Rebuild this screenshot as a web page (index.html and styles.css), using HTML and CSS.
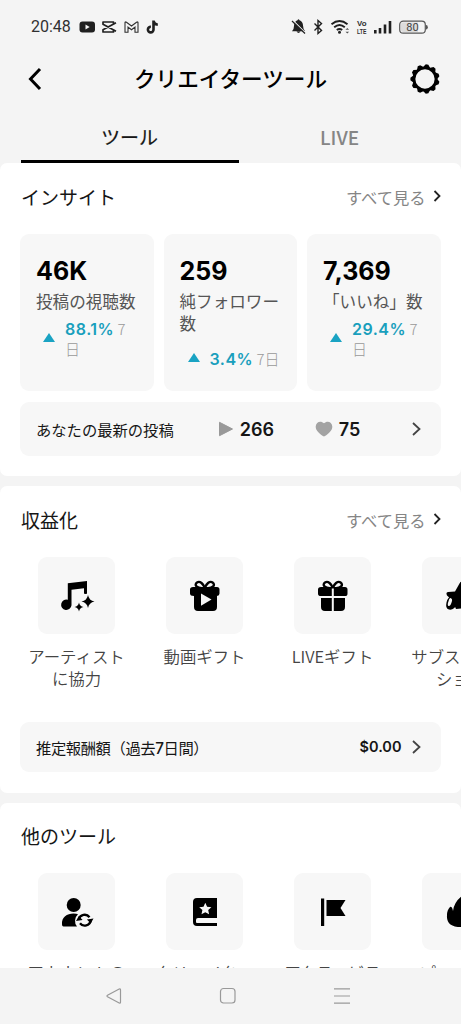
FILE: index.html
```
<!DOCTYPE html>
<html lang="ja">
<head>
<meta charset="utf-8">
<title>クリエイターツール</title>
<link rel="stylesheet" href="styles.css">
</head>
<body>
<div class="screen">
  <div class="status">
    <span class="clock">20:48</span>
    <svg class="apps" width="84" height="16" viewBox="0 0 84 16" fill="none">
      <rect x="0.500" y="2.500" width="15.500" height="11" rx="3" fill="#202020"/><path d="M6.500 5.500v5l4.200-2.500z" fill="#f4f4f4"/>
      <path d="M37 3.800 24 10.800V13H34.500V11.500M37 12.200 24 5.200V3H34.500V4.500" stroke="#202020" stroke-width="1.700" stroke-linejoin="round"/>
      <path d="M46 13.300V3.500q0-1 1.500-.3L52.500 7l5-3.800q1.500-.7 1.500.3v9.800h-3V8l-3.500 2.700L49 8v5.300z" stroke="#303030" stroke-width="1.100"/>
      <path d="M74.500 1.500v9a2.800 2.800 0 1 1-2.600-2.700M74.500 2q.6 3.300 4.300 3.700" stroke="#202020" stroke-width="2.600"/>
    </svg>
    <svg class="signals" width="138" height="20" viewBox="0 0 138 20" fill="none">
      <path d="M2 14.200q2-1.700 2-5.200Q4.200 4.300 7.500 3.300q1-2 2 0 3.300 1 3.600 5.700 0 3.500 2 5.200zM6.500 14.500h4q-2 2.800-4 0" fill="#202020"/><path d="M3.500 4 15.500 16" stroke="#f4f4f4" stroke-width="1.200"/><path d="M2 4l13 12.500" stroke="#202020" stroke-width="1.200"/>
      <path d="m24.500 6.500 7 7-3.500 3v-13l3.500 3-7 7" stroke="#202020" stroke-width="1.400"/>
      <path d="M41.500 7.300q8-6.500 16 0M44.200 10.300q5.300-4.500 10.600 0M46.800 13q2.700-2.200 5.400 0" stroke="#202020" stroke-width="1.900"/><circle cx="49.500" cy="15.200" r="1.500" fill="#202020"/><path d="m55.500 12.800 1.800-1.800 1.800 1.800zm0 1.900 1.800 1.800 1.800-1.800z" fill="#555"/>
      <path d="M84 13h2.600v3.500H84zm4.700-2h2.600v5.500h-2.600zm5-3.500h2.600v9h-2.600zm5-3.500h2.600v12.500h-2.600z" fill="#202020"/>
      <rect x="109.700" y="4.200" width="25.600" height="12" rx="3.500" stroke="#555" stroke-width="1.200"/><path d="M113 5.500h15v9.500h-15q-2 0-2-2v-5.500q0-2 2-2" fill="#dcdcdc"/><path d="M136 8q1.800 0 1.800 2.200t-1.800 2.300z" fill="#555"/>
      <text x="67" y="9.300" class="volte" textLength="9.500" lengthAdjust="spacingAndGlyphs">Vo</text><text x="67" y="16.500" class="volte" textLength="9.500" lengthAdjust="spacingAndGlyphs">LTE</text>
      <text x="122.500" y="14" class="battery">80</text>
    </svg>
  </div>
  <header class="titlebar">
    <svg class="back" width="16" height="24" viewBox="0 0 16 24"><path d="M13 2 3.500 12l9.500 10" fill="none" stroke="#000" stroke-width="3"/></svg>
    <h1>クリエイターツール</h1>
    <svg class="gear" width="30" height="30" viewBox="-15 -15 30 30"><circle r="11" fill="none" stroke="#000" stroke-width="2.700"/>
      <g fill="#000"><path id="tooth" d="M-14.600-1.300v2.600L-11 4v-8z"/><use href="#tooth" transform="rotate(32.730)"/><use href="#tooth" transform="rotate(65.450)"/><use href="#tooth" transform="rotate(98.180)"/><use href="#tooth" transform="rotate(130.910)"/><use href="#tooth" transform="rotate(163.640)"/><use href="#tooth" transform="rotate(196.360)"/><use href="#tooth" transform="rotate(229.090)"/><use href="#tooth" transform="rotate(261.820)"/><use href="#tooth" transform="rotate(294.550)"/><use href="#tooth" transform="rotate(327.270)"/></g>
    </svg>
  </header>
  <nav class="tabs"><div class="tab active">ツール</div><div class="tab">LIVE</div></nav>
  <main>
    <section class="insights">
      <div class="head"><h2>インサイト</h2><div class="all">すべて見る<svg width="8" height="12" viewBox="0 0 8 12"><path d="m1.500 1 5 5-5 5"/></svg></div></div>
      <div class="stats">
        <div class="stat"><b>46K</b><p>投稿の視聴数</p><div class="change"><i class="up"></i><span><em>88.1%</em> 7<br>日</span></div></div>
        <div class="stat"><b>259</b><p>純フォロワー<br>数</p><div class="change single"><i class="up"></i><span><em>3.4%</em> 7日</span></div></div>
        <div class="stat"><b>7,369</b><p>「いいね」数</p><div class="change"><i class="up"></i><span><em>29.4%</em> 7<br>日</span></div></div>
      </div>
      <div class="row latest"><span>あなたの最新の投稿</span>
        <div class="metric plays"><svg width="16" height="16" viewBox="0 0 16 16"><path d="M1.500 1.300 14.500 8 1.500 14.700z" fill="#999" stroke="#999" stroke-linejoin="round"/></svg>266</div>
        <div class="metric likes"><svg width="18" height="16" viewBox="0 0 18 16"><path d="M9 2.300C6-.8 1 .6.700 5.500.5 9.500 5 13.500 9 15.500c4-2 8.500-6 8.300-10C17 .6 12-.8 9 2.300z" fill="#a3a3a3"/></svg>75</div>
        <svg class="chev" width="9" height="14" viewBox="0 0 9 14"><path d="m1 1 6.500 6L1 13"/></svg>
      </div>
    </section>
    <section class="earnings">
      <div class="head"><h2>収益化</h2><div class="all">すべて見る<svg width="8" height="12" viewBox="0 0 8 12"><path d="m1.500 1 5 5-5 5"/></svg></div></div>
      <div class="tools">
        <div class="tool"><div class="tile"><svg width="38" height="38" viewBox="0 0 38 38"><path d="M9.800 6.300 29 4v12.800q-3 .3-3-.3v-5.300l-12.500 1.500v15.500a5.200 5.200 0 1 1-3.700-5.400z"/><path d="M30 18q1 5.500 6.500 6.500Q31 25.500 30 31q-1-5.500-6.500-6.500Q29 23.500 30 18zm-9 7.500q.7 3.800 4.500 4.500-3.800.7-4.500 4.500-.7-3.800-4.500-4.500 3.800-.7 4.500-4.500z"/></svg></div><p>アーティスト<br>に協力</p></div>
        <div class="tool"><div class="tile"><svg width="38" height="38" viewBox="0 0 38 38"><path d="M18.500 11C10 12 8 7.500 11 5.500c3-2 6.500 1.500 7.800 5.500 1.300-4 4.800-7.500 7.800-5.500 3 2 1 6.500-7 5.500" fill="none" stroke="#000" stroke-width="2.400"/><path d="M7 10h24q2.500 0 2.500 2.500v4q0 2.300-2.500 2.500v11q0 4-4 4H12q-4 0-4-4V19q-4 0-4-2.500v-4Q4 10 7 10z"/><path d="M15 16.500v12.200L25.500 22.600z" fill="#f7f7f7"/></svg></div><p>動画ギフト</p></div>
        <div class="tool"><div class="tile"><svg width="38" height="38" viewBox="0 0 38 38"><path d="M18.500 11C10 12 8 7.500 11 5.500c3-2 6.500 1.500 7.800 5.500 1.300-4 4.800-7.500 7.800-5.500 3 2 1 6.500-7 5.500" fill="none" stroke="#000" stroke-width="2.400"/><path d="M7 10h24q2.500 0 2.500 2.500v4q0 2.700-2.500 2.700H7q-3 0-3-2.700v-4Q4 10 7 10zm0 11h24v9q0 4-4 4H11q-4 0-4-4z"/><path d="M17.800 11.500h2V34h-2z" fill="#f7f7f7"/><path d="M4 19h30v1.500H4z" fill="#f7f7f7"/></svg></div><p>LIVEギフト</p></div>
        <div class="tool"><div class="tile"><svg width="38" height="38" viewBox="0 0 38 38"><path d="M17.500 6.500q1.500-3.500 3.500 0l4 8 9 1q3 .5 1 3l-7 7 2 8q0 3-3 2l-8-4-5 .500-4-9-5-4.500q-1.500-3 1-3.500l7-.5z"/><path d="M12 17q6 4.500 2.500 10.500Q12 33.500 7 32.500q-4-1-2.500-7Q6 19 12 17z"/><path d="M8.300 21q2.500.5 1.500 3.800-1.300 4.700-3.300 4.200-1.500-1 0-4.800.500-2.700 1.800-3.200z" fill="#f7f7f7"/></svg></div><p>サブスクリプ<br>ション</p></div>
      </div>
      <div class="row estimate"><span>推定報酬額（過去<span class="num">7</span>日間）</span><strong>$0.00</strong><svg class="chev" width="9" height="14" viewBox="0 0 9 14"><path d="m1 1 6.500 6L1 13"/></svg></div>
    </section>
    <section class="others">
      <div class="head"><h2>他のツール</h2></div>
      <div class="tools">
        <div class="tool"><div class="tile"><svg width="38" height="38" viewBox="0 0 38 38"><circle cx="15.700" cy="12" r="7"/><path d="M4 31.500C3.500 24 9 20.500 15.500 20.500q3 0 4.500.7a9 9 0 0 0-1 12.300H5.500Q4 33.500 4 31.500z"/><path d="M20.800 26.500a6 6 0 0 1 10.700-2.300M32.700 27.500a6 6 0 0 1-10.700 2.700" fill="none" stroke="#000" stroke-width="2.300"/><path d="m18 28 2.800-5 3.800 4zm17.500-2.500-2.800 5-3.800-4z"/></svg></div><p>アカウントの<br>確認</p></div>
        <div class="tool"><div class="tile"><svg width="38" height="38" viewBox="0 0 38 38"><path d="M11 5h20v20H12q-2 0-2 2v2q0 1 1 1h20v3H11q-4 0-4-4V9q0-4 4-4z"/><path d="m19.300 9.800 1.800 3.900 4.300.5-3.200 2.900.9 4.200-3.800-2.100-3.800 2.100.9-4.200-3.200-2.900 4.300-.5z" fill="#f7f7f7"/></svg></div><p>クリエイター<br>アカデミー</p></div>
        <div class="tool"><div class="tile"><svg width="38" height="38" viewBox="0 0 38 38"><path d="M7 5.500h3.200v27.500H7zM12.500 7h19l-5 8 5 8h-19z"/></svg></div><p>アクティビテ<br>ィ</p></div>
        <div class="tool"><div class="tile"><svg width="38" height="38" viewBox="0 0 38 38"><path d="M20 3q12 7 15 18-1 13-16 13Q4 34 5 22q0-5 3-8 2-1 3 4 1-9 9-15z"/></svg></div><p>プロモート</p></div>
      </div>
    </section>
  </main>
  <footer class="navbar">
    <svg width="18" height="18" viewBox="0 0 18 18"><path d="M14.200 2 2.500 8.300q-1 .7 0 1.400L14.200 16q1.300.5 1.300-1V3q0-1.500-1.300-1z"/></svg>
    <svg width="18" height="18" viewBox="0 0 18 18"><rect x="1.500" y="1.500" width="14.500" height="14.500" rx="3"/></svg>
    <svg width="18" height="18" viewBox="0 0 18 18"><path d="M1 1.800h16M1 9h16M1 16.200h16"/></svg>
  </footer>
</div>
</body>
</html>
```
FILE: styles.css
```
* { box-sizing: border-box; }
body, h1, h2, p { margin: 0; }
body { font-family: "Noto Sans CJK JP", sans-serif; color: #161616; background: #f4f4f4; }
svg { display: block; flex: none; }
.screen { width: 461px; height: 1024px; display: flex; flex-direction: column; overflow: hidden; }
.status { height: 53px; padding: 0 33px 0 31px; display: flex; align-items: center; flex: none; }
.clock { font: 16px/20px Roboto, sans-serif; width: 39px; color: #303030; white-space: nowrap; }
.apps { margin-left: 9px; }
.signals { margin-left: auto; }
.volte { font: 700 8px "Liberation Sans", sans-serif; fill: #303030; }
.battery { font: 11px Roboto, sans-serif; text-anchor: middle; fill: #444; }
.titlebar { height: 52px; flex: none; padding: 0 21px 0 27px; display: grid; grid-template-columns: 30px 1fr 30px; align-items: center; }
h1 { font-size: 21.6px; line-height: 30px; font-weight: 500; text-align: center; padding-right: 6px; color: #000; }
.titlebar svg { margin-bottom: 1px; }
h1 { margin-bottom: 3px; }
.tabs { height: 58px; flex: none; display: grid; grid-template-columns: 218px 202px; padding: 0 20.500px; }
.tab { text-align: center; font-size: 19px; line-height: 63px; height: 58px; font-weight: 500; color: #858585; }
.tab.active { border-bottom: 3px solid #000; color: #161616; font-weight: 400; -webkit-text-stroke: .2px #161616; }
main { height: 805px; overflow: hidden; display: flex; flex-direction: column; gap: 10px; flex: none; }
section { background: #fff; border-radius: 7px; flex: none; padding: 0 20.500px 0 20px; }
.insights { height: 313px; }
.earnings { height: 307px; overflow: hidden; }
.others { height: 165px; overflow: hidden; border-radius: 7px 7px 0 0; }
.head { height: 71px; padding-bottom: 4px; display: flex; align-items: center; justify-content: space-between; }
.earnings .head, .others .head { padding-bottom: 4px; }
.others .head { height: 70px; }
h2 { font-size: 19px; font-weight: 400; line-height: 28px; padding-left: 1px; }
.all { display: flex; align-items: center; gap: 7px; font-size: 16.3px; color: #858585; line-height: 24px; }
.all svg { fill: none; stroke: #222; stroke-width: 1.8; margin-bottom: 2px; }
.stats { display: grid; grid-template-columns: repeat(3, 1fr); gap: 10px; }
.stat { height: 157px; border-radius: 9px; background: #f7f7f7; padding: 22px 0 0 16px; white-space: nowrap; }
.stat b { display: block; font: 700 25px/31px Inter, sans-serif; color: #000; }
.stat p { font-size: 16.6px; line-height: 22px; margin-top: 3px; color: #555; }
.change { display: flex; align-items: center; padding-left: 7px; gap: 10px; margin-top: 7px; font-size: 15px; font-weight: 300; line-height: 20px; color: #999; }
.change .up { margin-bottom: 4px; }
.change.single { gap: 9px; padding-left: 8px; margin-top: 15px; }
.change em { font: 600 16px/20px Inter, sans-serif; color: #199fbd; letter-spacing: .5px; }
.change.single em { margin-left: 1px; }
.up { border: 6.500px solid transparent; border-top: 0; border-bottom: 9px solid #1aa3c3; }
.row { background: #f7f7f7; border-radius: 9px; display: flex; align-items: center; padding: 0 20px 0 16px; font-size: 15.3px; white-space: nowrap; }
.latest { height: 54px; margin-top: 11px; }
.latest > span { margin-bottom: 1px; }
.metric { display: flex; align-items: center; gap: 6px; font: 600 18px/24px Inter, sans-serif; padding-top: 1px; }
.metric svg { margin-bottom: 2px; }
.plays { margin-left: 44px; width: 97px; }
.chev { margin-left: auto; margin-bottom: 1px; fill: none; stroke: #444; stroke-width: 1.8; }
.estimate { height: 50px; margin-top: 10px; }
.estimate > span { letter-spacing: -.4px; }
.estimate strong { font: 600 14.500px/20px Inter, sans-serif; margin-left: auto; }
.estimate .chev { margin-left: 10px; }
.num { font-family: Inter, sans-serif; font-weight: 500; }
.tools { display: flex; height: 155px; margin: 0 -20.500px 0 -7.500px; overflow: hidden; }
.tool { width: 128px; flex: none; text-align: center; white-space: nowrap; }
.tile { width: 77px; height: 77px; margin: 0 auto 11px; border-radius: 9px; background: #f7f7f7; display: flex; align-items: center; justify-content: center; }
.tool p { font-size: 16.4px; line-height: 22px; color: #444; font-weight: 350; }
.others .tile { margin-bottom: 11px; }
.navbar { height: 56px; flex: none; display: grid; grid-template-columns: repeat(3, 114px); justify-content: center; justify-items: center; align-items: center; background: #f4f4f4; padding-right: 5px; }
.navbar svg { fill: none; stroke: #999; stroke-width: 1.2; }
```
